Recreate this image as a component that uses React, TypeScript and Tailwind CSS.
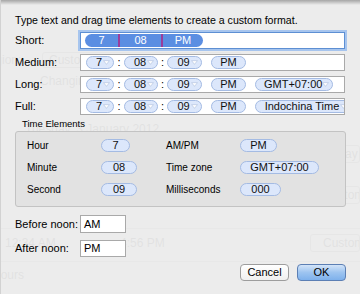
import React from "react";

// faint window content that shows through the sheet
function Backdrop() {
  return (
    <div className="flex flex-col text-[12px] text-[#3a3a3a]">
      <div className="h-[52px]" />
      <div className="flex items-center h-[16px]">
        <span className="-ml-[20px] w-[60px]">Region:</span>
        <div className="ml-[2px] w-[200px] h-[16px] border border-[#888] rounded-[3px] pl-[6px] leading-[14px]">Custom</div>
      </div>
      <div className="mt-[6px] pl-[40px] h-[14px] leading-[14px]">Changing…</div>
      <div className="mt-[34px] pl-[25px] leading-[14px]">Tuesday, 3 January 2012</div>
      <div className="mt-[8px] flex items-center h-[20px]">
        <span className="pl-[48px] w-[225px]">January 2012</span>
        <span className="w-[85px]">First day of week:</span>
        <div className="w-[50px] h-[18px] border border-[#888] rounded-[3px] pl-[6px] leading-[16px]">Sunday</div>
      </div>
      <div className="pl-[55px] h-[20px] leading-[20px]">5 Jan 2012</div>
      <div className="flex items-center h-[22px]">
        <span className="pl-[58px] w-[310px]">5/1/12</span>
        <div className="w-[50px] h-[18px] border border-[#888] rounded-[3px] pl-[12px] leading-[16px] overflow-hidden whitespace-nowrap">Custom</div>
      </div>
      <div className="mt-[22px] border-t border-[#aaa]" />
      <div className="mt-[4px] flex items-center h-[20px]">
        <span className="pl-[5px] w-[120px]">12:34 AM</span>
        <span className="w-[190px]">4:56 PM</span>
        <div className="w-[50px] h-[18px] border border-[#888] rounded-[3px] pl-[12px] leading-[16px] overflow-hidden whitespace-nowrap">Custom</div>
      </div>
      <div className="mt-[8px] border-t border-[#aaa]" />
      <div className="mt-[6px] -ml-[8px] leading-[14px]">Hours</div>
    </div>
  );
}

function Caret() {
  return (
    <svg viewBox="0 0 8 6" className="w-[7px] h-[5px] shrink-0">
      <path d="M0.5 0.8 L7.5 0.8 L4 5.2 Z" fill="#ffffff" stroke="#b3c2de" strokeWidth="0.8" />
    </svg>
  );
}

function Pill({ label, className, drop }: { label: string; className: string; drop?: boolean }) {
  return (
    <span
      className={`shrink-0 h-[13px] flex items-center rounded-full border border-[#a4bbe3] bg-[#dce7fb] text-[11px] leading-none text-[#111] ${
        drop ? "justify-between pl-[8px] pr-[3px]" : "justify-center"
      } ${className}`}
    >
      <span className={drop ? "flex-1 text-center" : ""}>{label}</span>
      {drop && <Caret />}
    </span>
  );
}

function Colon({ className }: { className: string }) {
  return <span className={`shrink-0 text-center text-[11px] leading-none ${className}`}>:</span>;
}

function FormatField({ last }: { last: string }) {
  return (
    <div className="flex items-center w-[265px] h-[17px] bg-white border border-[#a9a9a9] pl-[5px] overflow-hidden">
      <Pill label="7" drop className="w-[28px]" />
      <Colon className="w-[10px]" />
      <Pill label="08" drop className="w-[34px]" />
      <Colon className="w-[9px]" />
      <Pill label="09" drop className="w-[35px]" />
      <Pill label="PM" className="ml-[9px] w-[35px]" />
      <Pill label={last} drop className={last === "GMT+07:00" ? "ml-[9px] w-[78px]" : "ml-[9px] w-[96px]"} />
    </div>
  );
}

function Button({ label, primary }: { label: string; primary?: boolean }) {
  return (
    <button
      className={`w-[49px] h-[17px] rounded-[4px] text-[11px] leading-none text-black ${
        primary
          ? "border border-[#5c7fb4] bg-gradient-to-b from-[#d3e4f8] via-[#9dc4f0] to-[#7eb1ec]"
          : "border border-[#9d9d9d] bg-gradient-to-b from-white to-[#f0f0f0]"
      }`}
    >
      {label}
    </button>
  );
}

export default function App() {
  const rowLabel = "w-[65px] shrink-0 text-[11px] text-black";
  const elLabel = "w-[74px] shrink-0 text-[10px] text-black";
  return (
    <div className="relative w-[360px] h-[294px] overflow-hidden bg-[#e6e6e6] font-['Liberation_Sans',Arial,sans-serif]">
      <Backdrop />
      <div className="absolute inset-0 bg-[#ececec]/[0.94] border-l border-[#d2d2d2] flex flex-col">
        <div className="h-[5px] bg-gradient-to-b from-black/30 to-transparent" />
        <div className="flex flex-col pl-[14px]">
          <p className="mt-[8px] text-[10.6px] leading-[14px] text-black">
            Type text and drag time elements to create a custom format.
          </p>

          {/* Short, focused */}
          <div className="mt-[5px] flex items-center h-[17px]">
            <span className={rowLabel}>Short:</span>
            <div className="flex items-center w-[265px] h-[17px] bg-white border border-[#5d8fd3] shadow-[0_0_0_2px_#a7c5ee] pl-[4px]">
              <div className="flex h-[13px] w-[118px] rounded-full overflow-hidden bg-[#5b8ee2] text-white text-[11px] leading-none">
                <span className="w-[33px] flex items-center justify-center">7</span>
                <span className="w-[2px] bg-[#9a3d9c]" />
                <span className="w-[41px] flex items-center justify-center">08</span>
                <span className="w-[2px] bg-[#9a3d9c]" />
                <span className="flex-1 flex items-center justify-center">PM</span>
              </div>
            </div>
          </div>

          <div className="mt-[5px] flex items-center h-[17px]">
            <span className={rowLabel}>Medium:</span>
            <div className="flex items-center w-[265px] h-[17px] bg-white border border-[#a9a9a9] pl-[5px]">
              <Pill label="7" drop className="w-[28px]" />
              <Colon className="w-[10px]" />
              <Pill label="08" drop className="w-[34px]" />
              <Colon className="w-[9px]" />
              <Pill label="09" drop className="w-[35px]" />
              <Pill label="PM" className="ml-[9px] w-[35px]" />
            </div>
          </div>

          <div className="mt-[5px] flex items-center h-[17px]">
            <span className={rowLabel}>Long:</span>
            <FormatField last="GMT+07:00" />
          </div>

          <div className="mt-[5px] flex items-center h-[17px]">
            <span className={rowLabel}>Full:</span>
            <FormatField last="Indochina Time" />
          </div>

          <p className="mt-[3px] pl-[7px] text-[9.5px] leading-[12px] text-black">Time Elements</p>
          <div className="mt-[1px] w-[331px] h-[76px] rounded-[3px] border border-[#c3c3c3] bg-[#e2e2e2] pl-[11px] pt-[7px] grid grid-cols-[74px_65px_74px_1fr] auto-rows-[13px] gap-y-[9px] items-center">
            <span className={elLabel}>Hour</span>
            <Pill label="7" className="w-[29px]" />
            <span className={elLabel}>AM/PM</span>
            <Pill label="PM" className="w-[37px]" />
            <span className={elLabel}>Minute</span>
            <Pill label="08" className="w-[36px]" />
            <span className={elLabel}>Time zone</span>
            <Pill label="GMT+07:00" className="w-[79px]" />
            <span className={elLabel}>Second</span>
            <Pill label="09" className="w-[36px]" />
            <span className={elLabel}>Milliseconds</span>
            <Pill label="000" className="w-[41px]" />
          </div>

          <div className="mt-[8px] flex items-center h-[18px]">
            <span className={rowLabel}>Before noon:</span>
            <div className="w-[46px] h-[18px] bg-white border border-[#a9a9a9] pl-[3px] text-[11px] leading-[16px] text-black">AM</div>
          </div>
          <div className="mt-[7px] flex items-center h-[17px]">
            <span className={rowLabel}>After noon:</span>
            <div className="w-[46px] h-[17px] bg-white border border-[#a9a9a9] pl-[3px] text-[11px] leading-[15px] text-black">PM</div>
          </div>

          <div className="mt-[7px] w-[331px] flex justify-end gap-[8px]">
            <Button label="Cancel" />
            <Button label="OK" primary />
          </div>
        </div>
      </div>
    </div>
  );
}
